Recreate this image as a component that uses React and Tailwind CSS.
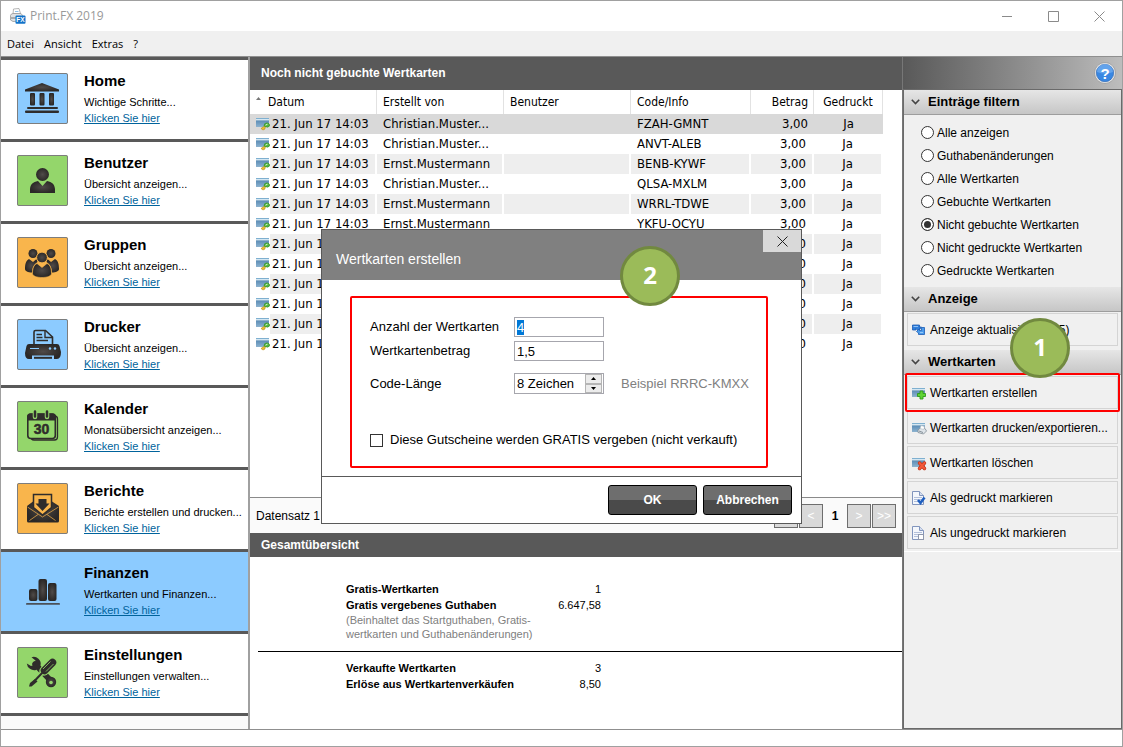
import { useRef, useEffect } from "react";
import clsx from "clsx";

const ARIAL = "font-['Liberation_Sans',Arial,sans-serif]";
const TAHOMA = "font-['DejaVu_Sans_Condensed','DejaVu_Sans',sans-serif]";
const SEGOE = "font-['Open_Sans','Noto_Sans',sans-serif]";

const INK = "url(#ink)";
const DARK = "#2f2c2b";

/* ---------- sidebar icons (51x51 tiles) ---------- */

const HomeIcon = () => (
  <g fill={INK}>
    <path d="M25 10 42 16.5V18.5H8V16.5Z" />
    <rect x="13" y="20" width="5" height="12.5" rx="1" />
    <rect x="22.5" y="20" width="5" height="12.5" rx="1" />
    <rect x="32" y="20" width="5" height="12.5" rx="1" />
    <rect x="10" y="34" width="31" height="2" rx="1" fill={DARK} />
    <rect x="8" y="37.5" width="34" height="2.5" rx="1" fill={DARK} />
  </g>
);

const UserIcon = () => (
  <g fill={INK}>
    <circle cx="25.5" cy="19.5" r="6.5" />
    <path d="M13 38V34C13.5 29 16 27 21 26L25.5 31 30 26C35 27 37.5 29 38 34V38Z" />
  </g>
);

const GroupIcon = () => (
  <g fill={INK}>
    <circle cx="16" cy="16.5" r="4.5" />
    <circle cx="34" cy="16.5" r="4.5" />
    <path d="M12 22 16 25 19.5 22 20.5 25C16.5 27.5 15.5 30 15 35.5 11 35.5 8 34 8 32 8 27 9 23.500 12 22Z" />
    <path d="M38 22 34 25 30.5 22 29.5 25C33.5 27.5 34.5 30 35 35.5 39 35.5 42 34 42 32 42 27 41 23.5 38 22Z" />
    <circle cx="25" cy="20.5" r="5.4" stroke="#f9b54c" strokeWidth="1" />
    <path d="M20 26.5 25 30.5 30 26.5C33.5 28 34.5 32 34.5 36.5 34.5 39 30 40.5 25 40.5 20 40.5 15.5 39 15.5 36.5 15.5 32 16.5 28 20 26.5Z" stroke="#f9b54c" strokeWidth=".6" />
  </g>
);

const PrinterIcon = () => (
  <g>
    <path d="M17 25V13Q17 11.5 18.5 11.5H28.5L35.5 18V25" fill="none" stroke={DARK} strokeWidth="1.6" />
    <path d="M28 12V18.5H35" fill="none" stroke={DARK} strokeWidth="1.4" />
    <path d="M19.5 15.5H25M19.5 18.5H25.5M19.5 21.5H31" stroke={DARK} strokeWidth="1.4" />
    <path d="M12 25H40Q42 25 42.5 27L44 33Q44 40 40 40H37V36.5H15V40H12Q8 40 8 34L9.5 27Q10 25 12 25Z" fill={INK} />
    <path d="M13 29.5H22" stroke="#8ccbff" strokeWidth="1" />
    <circle cx="33" cy="29.5" r="1.2" fill="#8ccbff" />
    <circle cx="38" cy="29.5" r="1.2" fill="#8ccbff" />
    <path d="M17 38.8H35" stroke={DARK} strokeWidth="2" />
  </g>
);

const CalendarIcon = () => (
  <g>
    <rect x="14" y="15" width="26.5" height="24" rx="3" fill="none" stroke={DARK} strokeWidth="1.3" />
    <rect x="10.8" y="13" width="27.5" height="24.5" rx="3" fill="#94d66b" stroke={DARK} strokeWidth="1.6" />
    <path d="M10 19.5V16Q10 12.5 13.5 12.5H35.5Q39 12.5 39 16V19.5Z" fill={DARK} />
    <path d="M18 10.5V16M30 10.5V16" stroke="#94d66b" strokeWidth="4.5" strokeLinecap="round" />
    <path d="M18 10.5V15.5M30 10.5V15.5" stroke={DARK} strokeWidth="2.5" strokeLinecap="round" />
    <text x="24.5" y="33" textAnchor="middle" fontSize="14" fontWeight="700" fill={DARK} stroke={DARK} strokeWidth=".5" fontFamily="Liberation Sans, sans-serif">30</text>
  </g>
);

const MailIcon = () => (
  <g>
    <path d="M10 23 16 18.500V12H35V18.500L42 23V38Q42 39.5 40.5 39.5H11.5Q10 39.5 10 38Z" fill={INK} />
    <path d="M16.5 11.5H34.500V24.5L25.5 32 16.500 24.5Z" fill="#f9b54c" stroke={DARK} strokeWidth="1.5" />
    <path d="M21.5 16H29.5V20.5H32.5L25.5 28 18.5 20.5H21.5Z" fill={DARK} />
    <path d="M10.5 24 25.5 34 41.5 24M21 31.5 12.5 37.5M30 31.5 38.5 37.5" fill="none" stroke="#f9b54c" strokeWidth=".7" />
  </g>
);

const ChartIcon = () => (
  <g fill={INK}>
    <rect x="12" y="24" width="8.5" height="12" rx="2" />
    <rect x="21.5" y="14" width="8.5" height="22" rx="2" />
    <rect x="31" y="18" width="8.5" height="18" rx="2" />
    <rect x="9" y="38" width="34" height="1.8" rx=".9" fill="#4a5058" />
  </g>
);

const ToolsIcon = () => (
  <g>
    <path d="M18 17 33 33" stroke={DARK} strokeWidth="5.5" strokeLinecap="round" />
    <path d="M14.5 10.2A7 7 0 0 1 23.5 18.5L19 23A7.500 7.500 0 0 1 9.8 16.5L14 19 18 17.5 18.500 13.500Z" fill={DARK} />
    <circle cx="34" cy="35" r="5.2" fill={INK} />
    <circle cx="34" cy="35.5" r="1.8" fill="#94d66b" />
    <path d="M35.500 15.500 27 24" stroke="#94d66b" strokeWidth="9.5" strokeLinecap="round" />
    <path d="M35.5 15.5 27.5 23.5" stroke={DARK} strokeWidth="7.5" strokeLinecap="round" />
    <path d="M33.5 14.5 26 22M36.5 17 29 24.5" stroke="#94d66b" strokeWidth=".8" />
    <path d="M25 26 17.5 34" stroke="#94d66b" strokeWidth="4.5" />
    <path d="M26 25 17 34.5" stroke={DARK} strokeWidth="2" />
    <path d="M18 32 20.500 34.5 14.5 39.5 12 39.5 13 36Z" fill={DARK} />
  </g>
);

/* ---------- small 16px icons ---------- */

const Card = ({ y = 3 }) => (
  <g transform={`translate(0 ${y})`}>
    <rect width="13" height="1" fill="#7fb0d0" />
    <rect y="1" width="13" height="1" fill="#d5e7f2" />
    <rect y="2" width="13" height="1" fill="#8fb2cc" />
    <rect y="3" width="13" height="6" fill="url(#card)" />
  </g>
);

const svg16 = { width: 16, height: 16, viewBox: "0 0 16 16", "aria-hidden": true };

const CardBookedIcon = () => (
  <svg width="14" height="16" viewBox="0 0 14 16" className="shrink-0" aria-hidden="true">
    <Card y={2} />
    <path d="M5 12.5 9 9.5 10.5 10.5 9 11.5 9 13 7 14Z" fill="#e8bd33" stroke="#b98e17" strokeWidth=".6" />
    <path d="M8 10Q8 7 10.500 7H12L13.600 8.500V10L11.500 11.200Z" fill="#4fb73c" stroke="#2f8b27" strokeWidth=".6" />
    <path d="M9.5 9.2 11.5 8.2" stroke="#e3f8d9" strokeWidth="1" />
  </svg>
);

const CardAddIcon = () => (
  <svg {...svg16}>
    <Card />
    <path d="M8.5 6.5H11.5V9H14V12H11.5V14.5H8.5V12H6V9H8.5Z" transform="translate(-.5 -.5)" fill="#5fd435" stroke="#2f9a1c" strokeWidth=".9" />
  </svg>
);

const CardPrintIcon = () => (
  <svg {...svg16}>
    <Card />
    <path d="M6 10 9 7.500 13 8.500 14.5 11 11.5 14 6 12.5Z" fill="#dfe5ea" stroke="#7f8a93" strokeWidth=".8" />
    <path d="M7 11 11 12.5" stroke="#6f7b85" strokeWidth=".8" />
    <path d="M9 5.5 12.5 6.5 12 9.500 8 8.500Z" fill="#fff" stroke="#a8b1b8" strokeWidth=".5" />
  </svg>
);

const CardDeleteIcon = () => (
  <svg {...svg16}>
    <Card />
    <path d="M7.500 8 12.500 13.500M12.500 8 7.500 13.500" stroke="#c02d12" strokeWidth="3.4" strokeLinecap="round" />
    <path d="M7.500 8 12.500 13.500M12.500 8 7.500 13.500" stroke="#f2583a" strokeWidth="2.2" strokeLinecap="round" />
  </svg>
);

const Sheet = () => (
  <g>
    <path d="M.5 1.5H7.5L11.5 5.5V14.5H.5Z" fill="#f4f7fc" stroke="#8195bd" />
    <path d="M7.5 1.5V5.5H11.5" fill="#d5deef" stroke="#8195bd" />
    <path d="M2 7.5H10M2 9.5H10M2 11.5H7" stroke="#b3c0da" />
  </g>
);

const SheetCheckIcon = () => (
  <svg {...svg16}>
    <Sheet />
    <path d="M6 10 8.5 13 12.500 7.5" fill="none" stroke="#1f5fc0" strokeWidth="2.6" />
  </svg>
);

const SheetPlainIcon = () => (
  <svg {...svg16}>
    <Sheet />
    <rect x="6.5" y="9.5" width="5" height="5" fill="#fff" stroke="#8e98ad" />
  </svg>
);

const RefreshIcon = () => (
  <svg {...svg16}>
    <path d="M.5 3H7.500V5H9.500L6.500 9 4 6.500V8H.5Z" fill="#2f7fdc" stroke="#1c5cb3" strokeWidth=".8" />
    <path d="M12.5 5.5V12.5H6.500V11L4.5 9.5 7.500 6.5V8.5H9.500V5.5Z" fill="#4a9bec" stroke="#1c5cb3" strokeWidth=".8" />
    <path d="M1.500 4.5H6M8 10.5H11" stroke="#a9d2fb" strokeWidth=".8" />
  </svg>
);

const AppIcon = () => (
  <svg {...svg16}>
    <path d="M3 6 3.5 1 9 .5 10.5 5.5Z" fill="#fff" stroke="#a5a5a5" strokeWidth=".8" />
    <path d="M5 3.500H8.500" stroke="#8fc3ea" strokeWidth="1" />
    <path d="M.5 7.5Q1 5.5 3 5.5H11L13 8V13L3 13.500.5 12Z" fill="#dfe2e4" stroke="#999" strokeWidth=".8" />
    <path d="M1 10H8" stroke="#777" strokeWidth="1" />
    <rect x="5.500" y="7.5" width="10" height="8.300" rx="1" fill="#1273c9" />
    <text x="10.5" y="14" textAnchor="middle" fontSize="6.5" fontWeight="700" fill="#fff" fontFamily="Liberation Sans, sans-serif">FX</text>
  </svg>
);

/* ---------- data ---------- */

const MODULES = [
  { title: "Home", text: "Wichtige Schritte...", Icon: HomeIcon, tile: "bg-[#8ccbff]" },
  { title: "Benutzer", text: "Übersicht anzeigen...", Icon: UserIcon, tile: "bg-[#94d66b]" },
  { title: "Gruppen", text: "Übersicht anzeigen...", Icon: GroupIcon, tile: "bg-[#f9b54c]" },
  { title: "Drucker", text: "Übersicht anzeigen...", Icon: PrinterIcon, tile: "bg-[#8ccbff]" },
  { title: "Kalender", text: "Monatsübersicht anzeigen...", Icon: CalendarIcon, tile: "bg-[#94d66b]" },
  { title: "Berichte", text: "Berichte erstellen und drucken...", Icon: MailIcon, tile: "bg-[#f9b54c]" },
  { title: "Finanzen", text: "Wertkarten und Finanzen...", Icon: ChartIcon, active: true },
  { title: "Einstellungen", text: "Einstellungen verwalten...", Icon: ToolsIcon, tile: "bg-[#94d66b]" },
];

const ROWS = [
  ["Christian.Muster...", "FZAH-GMNT"],
  ["Christian.Muster...", "ANVT-ALEB"],
  ["Ernst.Mustermann", "BENB-KYWF"],
  ["Christian.Muster...", "QLSA-MXLM"],
  ["Ernst.Mustermann", "WRRL-TDWE"],
  ["Ernst.Mustermann", "YKFU-OCYU"],
  ["", ""],
  ["", ""],
  ["", ""],
  ["", ""],
  ["", ""],
  ["", ""],
];

const FILTERS = [
  "Alle anzeigen",
  "Guthabenänderungen",
  "Alle Wertkarten",
  "Gebuchte Wertkarten",
  "Nicht gebuchte Wertkarten",
  "Nicht gedruckte Wertkarten",
  "Gedruckte Wertkarten",
];

/* ---------- window chrome ---------- */

const TitleBar = () => (
  <header className={clsx("flex h-[30px] items-center bg-white pl-[9px]", SEGOE)}>
    <AppIcon />
    <h1 className="ml-1 flex-1 text-[12px] text-[#999]">Print.FX 2019</h1>
    {[
      ["Minimieren", "M0 5.5H10"],
      ["Maximieren", "M.5 .5H10.5V10.5H.5Z"],
      ["Schließen", "M.5 .5 10.5 10.5M10.5 .5 .5 10.5"],
    ].map(([label, d]) => (
      <button key={label} aria-label={label} className="flex h-full w-[46px] items-center justify-center">
        <svg width="11" height="11" viewBox="0 0 11 11" fill="none" stroke="#8a8a8a">
          <path d={d} />
        </svg>
      </button>
    ))}
  </header>
);

const MenuBar = () => (
  <nav className={clsx("flex h-[25px] items-center gap-[10px] bg-[#f0f0f0] pt-[2px] pl-[6px] text-[11px]", SEGOE)}>
    {["Datei", "Ansicht", "Extras", "?"].map((m) => (
      <button key={m}>{m}</button>
    ))}
  </nav>
);

const Sidebar = () => (
  <nav className="w-[248px] shrink-0 border-r border-[#a0a0a0] bg-[#fafafa]">
    <ul className="border-b-3 border-[#595959]">
      {MODULES.map(({ title, text, Icon, tile, active }) => (
        <li
          key={title}
          className={clsx(
            "flex h-[82px] gap-4 border-t-3 border-[#595959] pl-4",
            active ? "bg-[#8ccbff]" : "bg-white"
          )}
        >
          <div className={clsx("mt-[13px] h-[51px] w-[51px]", tile, !active && "rounded-[2px] outline-1 -outline-offset-1 outline-[#7d7d7d]")}>
            <svg width="51" height="51" viewBox="0 0 51 51" aria-hidden="true">
              <Icon />
            </svg>
          </div>
          <div className="pt-[11px] text-[11px] leading-4 whitespace-nowrap">
            <h2 className="mb-[3px] text-[15px] leading-5 font-bold">{title}</h2>
            <p>{text}</p>
            <a href="#" className="block text-[#00639c] underline">Klicken Sie hier</a>
          </div>
        </li>
      ))}
    </ul>
  </nav>
);

/* ---------- card list ---------- */

const CardTable = () => (
  <div className={clsx("flex-1 bg-white pr-[19px] text-[13px]", TAHOMA)}>
    <table className="w-full table-fixed border-separate border-spacing-0 whitespace-nowrap">
      <colgroup>
        <col className="w-[127px]" />
        <col className="w-[127px]" />
        <col />
        <col className="w-[120px]" />
        <col className="w-[63px]" />
        <col className="w-[69px]" />
      </colgroup>
      <thead>
        <tr className="h-6 text-left text-[12px] [&>th]:border-r [&>th]:border-[#e2e2e2] [&>th]:p-0 [&>th]:font-normal">
          <th>
            <span className="flex items-center">
              <svg width="18" height="12" viewBox="0 0 18 12" aria-hidden="true">
                <path d="M6 4 8.5 1 11 4Z" fill="#777" />
              </svg>
              Datum
            </span>
          </th>
          <th><span className="pl-[6px]">Erstellt von</span></th>
          <th><span className="pl-[6px]">Benutzer</span></th>
          <th><span className="pl-[6px]">Code/Info</span></th>
          <th className="text-right"><span className="pr-[5px]">Betrag</span></th>
          <th className="text-center">Gedruckt</th>
        </tr>
      </thead>
      <tbody>
        {ROWS.map(([name, code], i) => (
          <tr
            key={i}
            className={clsx(
              "h-5 leading-5 [&>td]:p-0",
              i === 0 && "bg-[#d9d9d9]",
              i > 0 && "[&>td]:border-r-2 [&>td]:border-white",
              i > 0 && i % 2 === 0 && "bg-[#eeeeee]"
            )}
          >
            <td>
              <span className="flex items-center">
                <span className={clsx("flex h-5 w-5 items-center pl-[6px]", i > 0 && "bg-white")}>
                  <CardBookedIcon />
                </span>
                <span className="pl-[2px]">21. Jun 17 14:03</span>
              </span>
            </td>
            <td><span className="pl-[6px]">{name}</span></td>
            <td />
            <td><span className="pl-[6px]">{code}</span></td>
            <td className="text-right"><span className="pr-[6px]">3,00</span></td>
            <td className="text-center">Ja</td>
          </tr>
        ))}
      </tbody>
    </table>
  </div>
);

const PagerButton = ({ label, children }) => (
  <button aria-label={label} className="h-6 w-6 border border-[#6e6e6e] bg-[#d9d9d9] text-white">
    {children}
  </button>
);

const Pager = () => (
  <div className="flex h-9 items-center border-t border-[#8a8a8a] bg-[#fafafa] px-[6px] text-[12px]">
    <span className="flex-1">Datensatz 1</span>
    <div className="flex items-center gap-px">
      <PagerButton label="Erste Seite">&lt;&lt;</PagerButton>
      <PagerButton label="Vorherige Seite">&lt;</PagerButton>
      <b className="w-[22px] text-center">1</b>
      <PagerButton label="Nächste Seite">&gt;</PagerButton>
      <PagerButton label="Letzte Seite">&gt;&gt;</PagerButton>
    </div>
  </div>
);

const SummaryRow = ({ label, value, note }) => (
  <div className="grid grid-cols-[190px_65px] pl-24">
    <dt className="font-bold">{label}</dt>
    <dd className="text-right">{value}</dd>
    {note && <dd className="leading-[14px] text-[#808080]">{note}</dd>}
  </div>
);

const Summary = () => (
  <section className="h-[196px] shrink-0 bg-white text-[11px] leading-4">
    <h2 className="h-6 bg-[#595959] pl-[11px] text-[12px] leading-6 font-bold text-white">Gesamtübersicht</h2>
    <dl className="pt-6 pb-[10px]">
      <SummaryRow label="Gratis-Wertkarten" value="1" />
      <SummaryRow
        label="Gratis vergebenes Guthaben"
        value="6.647,58"
        note={<>(Beinhaltet das Startguthaben, Gratis-<br />wertkarten und Guthabenänderungen)</>}
      />
    </dl>
    <hr className="ml-2 border-black" />
    <dl className="pt-2">
      <SummaryRow label="Verkaufte Wertkarten" value="3" />
      <SummaryRow label="Erlöse aus Wertkartenverkäufen" value="8,50" />
    </dl>
  </section>
);

/* ---------- right column ---------- */

const Section = ({ title, children }) => (
  <section>
    <h2 className="flex h-[25px] items-center gap-2 border-b border-[#9d9d9d] bg-linear-to-b from-[#e6e6e6] to-[#c6c6c6] pl-[7px] text-[13px] font-bold">
      <svg width="9" height="6" viewBox="0 0 9 6" fill="none" stroke="#444" strokeWidth="1.6" aria-hidden="true">
        <path d="M.8 .8 4.5 4.5 8.2 .8" />
      </svg>
      {title}
    </h2>
    {children}
  </section>
);

const Action = ({ icon, children }) => (
  <button className="flex h-[33px] w-full items-center gap-[2px] border border-[#d4d4d4] pl-1 text-left whitespace-nowrap">
    {icon}
    {children}
  </button>
);

const Badge = ({ className, children }) => (
  <span
    className={clsx(
      "absolute flex h-[60px] w-[60px] items-center justify-center rounded-full border-3 border-[#71893f] bg-[#9bbb59] pb-[2px] text-[24px] leading-none font-bold text-white",
      SEGOE,
      className
    )}
  >
    {children}
  </span>
);

const ActionPanel = () => (
  <aside className="flex w-[220px] shrink-0 flex-col border-l border-[#777] text-[12px]">
    <div className="flex h-8 items-center justify-end bg-linear-to-r from-[#595959] to-[#bdbdbd] pr-[6px]">
      <button aria-label="Hilfe">
        <svg width="22" height="22" viewBox="0 0 22 22" className="block">
          <circle cx="11" cy="11" r="10.5" fill="#e8e8e8" stroke="#999" strokeWidth=".8" />
          <circle cx="11" cy="11" r="8.7" fill="#3987e2" stroke="#2a62ad" strokeWidth=".6" />
          <path d="M3 10A8 8 0 0 1 19 10Q11 13 3 10Z" fill="#7fb6f3" opacity=".6" />
          <text x="11" y="16.5" textAnchor="middle" fontSize="15" fontWeight="700" fill="#fff" fontFamily="Liberation Sans, sans-serif">?</text>
        </svg>
      </button>
    </div>
    <div className="flex-1 border border-[#6a6a6a] bg-[#f0f0f0]">
      <Section title="Einträge filtern">
        <div className="pt-[6px] pb-[5px] pl-[17px]">
          {FILTERS.map((f) => (
            <label key={f} className="flex h-[23px] items-center gap-[3px]">
              <input
                type="radio"
                name="filter"
                defaultChecked={f === "Nicht gebuchte Wertkarten"}
                className="h-[13px] w-[13px] appearance-none rounded-full border border-[#333] bg-white checked:bg-[#333] checked:shadow-[inset_0_0_0_2px_white]"
              />
              {f}
            </label>
          ))}
        </div>
      </Section>
      <Section title="Anzeige">
        <div className="px-[3px] pt-px pb-1">
          <Action icon={<RefreshIcon />}>Anzeige aktualisieren (F5)</Action>
        </div>
      </Section>
      <Section title="Wertkarten">
        <div className="flex flex-col gap-[2px] border-b border-white px-[3px] pt-px pb-[2px]">
          <div className="relative">
            <Action icon={<CardAddIcon />}>Wertkarten erstellen</Action>
            <span className="pointer-events-none absolute -inset-x-[2px] -inset-y-[3px] rounded-[2px] border-2 border-[#fe0000]" />
            <Badge className="-top-[58px] left-[103px]">1</Badge>
          </div>
          <Action icon={<CardPrintIcon />}>Wertkarten drucken/exportieren...</Action>
          <Action icon={<CardDeleteIcon />}>Wertkarten löschen</Action>
          <Action icon={<SheetCheckIcon />}>Als gedruckt markieren</Action>
          <Action icon={<SheetPlainIcon />}>Als ungedruckt markieren</Action>
        </div>
      </Section>
    </div>
  </aside>
);

/* ---------- dialog ---------- */

const FIELD = "h-5 w-[90px] border border-[#a6a6ad] bg-white px-[2px] text-[13px] outline-none selection:bg-[#0078d7] selection:text-white";

const SpinButton = ({ label, d }) => (
  <button type="button" aria-label={label} className="flex flex-1 items-center justify-center border border-[#b5b5b5] bg-[#ececec]">
    <svg width="5" height="3" viewBox="0 0 5 3">
      <path d={d} fill="#000" />
    </svg>
  </button>
);

const DialogButton = ({ children }) => (
  <button className="h-[30px] w-[89px] rounded-[3px] border border-black bg-linear-to-b from-[#6e6e6e] from-50% to-[#4a4a4a] to-50% text-[12px] font-bold text-white">
    {children}
  </button>
);

const CreateDialog = () => {
  const countRef = useRef(null);

  useEffect(() => {
    countRef.current?.focus();
    countRef.current?.select();
  }, []);

  return (
    <div className="pointer-events-none fixed inset-0 flex items-center justify-center pt-[6px]">
      <div role="dialog" aria-labelledby="dlg-title" className="pointer-events-auto w-[481px] border border-[#595959] bg-white text-[13px]">
        <header className="flex h-[50px] items-start justify-between bg-[#808080]">
          <h2 id="dlg-title" className="self-center pt-2 pl-[14px] text-[14px] text-white">Wertkarten erstellen</h2>
          <button aria-label="Dialog schließen" className="flex h-[22px] w-[38px] items-center justify-center bg-[#d9d9d9]">
            <svg width="11" height="11" viewBox="0 0 11 11" fill="none" stroke="#222">
              <path d="M.5 .5 10.5 10.5M10.5 .5 .5 10.5" />
            </svg>
          </button>
        </header>
        <form className="relative mt-4 mr-[33px] mb-2 ml-7 rounded-[2px] border-2 border-[#fe0000] pt-[19px] pb-4 pl-[18px]">
          <Badge className="-top-[52px] left-[268px]">2</Badge>
          <div className="mb-1 flex items-center">
            <label htmlFor="count" className="w-36">Anzahl der Wertkarten</label>
            <input id="count" ref={countRef} defaultValue="4" className={FIELD} />
          </div>
          <div className="mb-3 flex items-center">
            <label htmlFor="amount" className="w-36">Wertkartenbetrag</label>
            <input id="amount" defaultValue="1,5" className={FIELD} />
          </div>
          <div className="flex items-center">
            <label htmlFor="length" className="w-36">Code-Länge</label>
            <div className="flex h-[21px] w-[90px] border border-[#a6a6ad]">
              <input id="length" defaultValue="8 Zeichen" className="w-[70px] px-[2px] text-[13px] outline-none" />
              <div className="flex w-[17px] flex-col">
                <SpinButton label="Länger" d="M0 3 2.5 0 5 3Z" />
                <SpinButton label="Kürzer" d="M0 0 2.5 3 5 0Z" />
              </div>
            </div>
            <span className="pl-[17px] text-[#808080]">Beispiel RRRC-KMXX</span>
          </div>
          <label className="mt-9 flex h-5 items-center gap-[7px]">
            <input type="checkbox" className="h-[13px] w-[13px] appearance-none border border-[#333] bg-white checked:bg-[#333]" />
            Diese Gutscheine werden GRATIS vergeben (nicht verkauft)
          </label>
        </form>
        <footer className="flex justify-end gap-[6px] border-t border-[#595959] py-2 pr-[9px]">
          <DialogButton>OK</DialogButton>
          <DialogButton>Abbrechen</DialogButton>
        </footer>
      </div>
    </div>
  );
};

export default function App() {
  return (
    <div className={clsx("flex min-h-screen flex-col border border-[#a0a0a0] bg-white text-black", ARIAL)}>
      <svg width="0" height="0" className="absolute" aria-hidden="true">
        <radialGradient id="ink">
          <stop offset="0" stopColor="#504b49" />
          <stop offset="1" stopColor="#2b2827" />
        </radialGradient>
        <linearGradient id="card" x2="0" y2="1">
          <stop offset="0" stopColor="#5f8fb8" />
          <stop offset="1" stopColor="#8db3cf" />
        </linearGradient>
      </svg>
      <TitleBar />
      <MenuBar />
      <div className="flex flex-1 border-y border-[#8f8f8f]">
        <Sidebar />
        <main className="flex min-w-0 flex-1 flex-col border-l border-[#a0a0a0]">
          <h2 className="h-[33px] bg-[#595959] pl-[11px] text-[12px] leading-[33px] font-bold text-white">
            Noch nicht gebuchte Wertkarten
          </h2>
          <CardTable />
          <Pager />
          <Summary />
        </main>
        <ActionPanel />
      </div>
      <footer className="h-4 bg-white" />
      <CreateDialog />
    </div>
  );
}
